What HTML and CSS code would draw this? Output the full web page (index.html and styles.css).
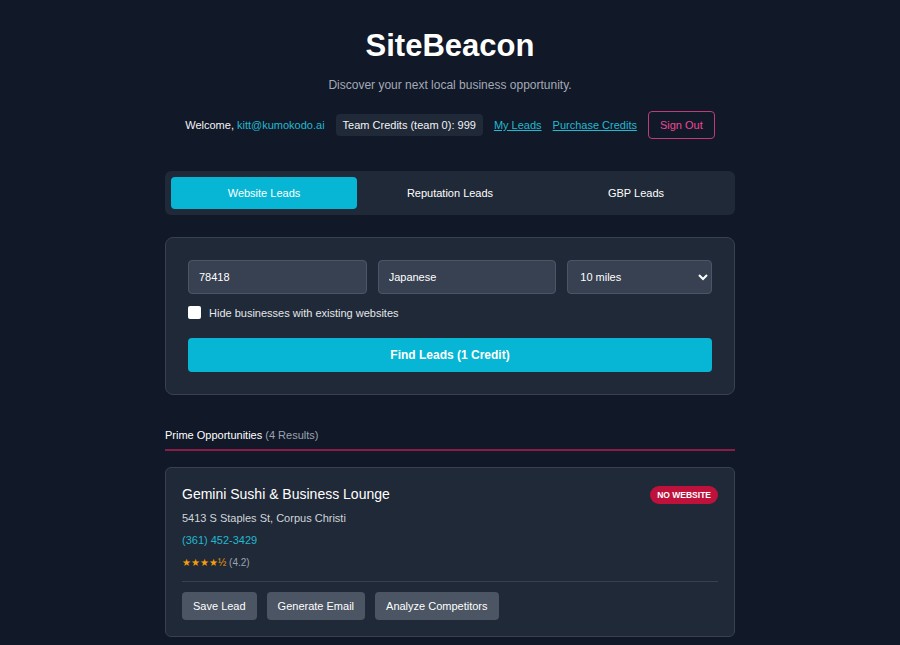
FILE: index.html
```html
<!DOCTYPE html>
<html lang="en">

<head>
    <meta charset="UTF-8">
    <meta name="viewport" content="width=device-width, initial-scale=1.0">
    <title>SiteBeacon</title>
    <link rel="stylesheet" href="styles.css">
</head>

<body>
    <main class="container">
        <header class="header">
            <h1 class="title">SiteBeacon</h1>
            <p class="subtitle">Discover your next local business opportunity.</p>
            <div class="user-bar">
                <span>Welcome, <span class="email">kitt@kumokodo.ai</span></span>
                <span class="credits">Team Credits (team 0): 999</span>
                <a href="#" class="link">My Leads</a>
                <a href="#" class="link">Purchase Credits</a>
                <button class="sign-out">Sign Out</button>
            </div>
        </header>

        <nav class="tabs">
            <button class="tab active">Website Leads</button>
            <button class="tab">Reputation Leads</button>
            <button class="tab">GBP Leads</button>
        </nav>

        <section class="search-card">
            <div class="fields">
                <input class="field" value="78418">
                <input class="field" value="Japanese">
                <select class="field select">
                    <option>10 miles</option>
                </select>
            </div>
            <label class="check-row">
                <span class="checkbox"></span>
                Hide businesses with existing websites
            </label>
            <button class="find-button">Find Leads (1 Credit)</button>
        </section>

        <h2 class="results-title">Prime Opportunities <span class="count">(4 Results)</span></h2>

        <article class="lead-card">
            <div class="lead-top">
                <div>
                    <h3 class="lead-name">Gemini Sushi &amp; Business Lounge</h3>
                    <div class="lead-address">5413 S Staples St, Corpus Christi</div>
                    <div class="lead-phone">(361) 452-3429</div>
                    <div class="lead-rating"><span class="stars">★★★★½</span> (4.2)</div>
                </div>
                <span class="badge">NO WEBSITE</span>
            </div>
            <div class="lead-actions">
                <button class="gray-button">Save Lead</button>
                <button class="gray-button">Generate Email</button>
                <button class="gray-button">Analyze Competitors</button>
            </div>
        </article>
    </main>
</body>

</html>
```

FILE: styles.css
```css
* {
    box-sizing: border-box;
}

body {
    margin: 0;
    background-color: #111827;
    color: #f3f4f6;
    font-family: "Liberation Sans", Arial, sans-serif;
    font-size: 11px;
}

.container {
    width: 570px;
    margin: 0 auto;
    padding-top: 28px;
}

.header {
    display: flex;
    flex-direction: column;
    align-items: center;
}

.title {
    margin: 0;
    font-size: 31px;
    line-height: 36px;
    font-weight: bold;
    color: #ffffff;
}

.subtitle {
    margin: 14px 0 0;
    font-size: 12px;
    color: #a3aab5;
}

.user-bar {
    display: flex;
    align-items: center;
    gap: 11px;
    margin-top: 19px;
    white-space: nowrap;
    color: #f3f4f6;
}

.email {
    color: #22b8cf;
}

.credits {
    padding: 5px 7px;
    background-color: #1f2937;
    border-radius: 4px;
}

.link {
    color: #22b8cf;
    text-decoration: underline;
}

.sign-out {
    height: 28px;
    padding: 0 11px;
    background: none;
    border: 1px solid #be3c78;
    border-radius: 4px;
    color: #ec4899;
    font-family: inherit;
    font-size: 11px;
}

.tabs {
    display: flex;
    margin-top: 32px;
    padding: 6px;
    background-color: #1f2937;
    border-radius: 6px;
}

.tab {
    flex: 1;
    height: 32px;
    background: none;
    border: none;
    border-radius: 4px;
    color: #ffffff;
    font-family: inherit;
    font-size: 11px;
}

.tab.active {
    background-color: #06b6d4;
}

.search-card {
    margin-top: 22px;
    padding: 22px;
    background-color: #1f2937;
    border: 1px solid #374151;
    border-radius: 8px;
}

.fields {
    display: grid;
    grid-template-columns: 1fr 1fr 0.81fr;
    gap: 11px;
}

.field {
    height: 34px;
    padding: 0 10px;
    background-color: #374151;
    border: 1px solid #4b5563;
    border-radius: 4px;
    color: #ffffff;
    font-family: inherit;
    font-size: 11px;
    outline: none;
}

.select {
    padding-left: 8px;
}

.check-row {
    display: flex;
    align-items: center;
    gap: 8px;
    margin-top: 12px;
    color: #e5e7eb;
}

.checkbox {
    width: 13px;
    height: 13px;
    background-color: #ffffff;
    border-radius: 2px;
}

.find-button {
    width: 100%;
    height: 34px;
    margin-top: 19px;
    background-color: #06b6d4;
    border: none;
    border-radius: 4px;
    color: #ffffff;
    font-family: inherit;
    font-size: 12px;
    font-weight: bold;
}

.results-title {
    margin: 34px 0 0;
    padding-bottom: 8px;
    border-bottom: 2px solid #8a1c48;
    font-size: 11px;
    font-weight: normal;
    color: #ffffff;
}

.count {
    color: #9ca3af;
}

.lead-card {
    margin-top: 16px;
    padding: 18px 16px 16px;
    background-color: #1f2937;
    border: 1px solid #374151;
    border-radius: 6px;
}

.lead-top {
    display: flex;
    justify-content: space-between;
    align-items: flex-start;
    padding-bottom: 13px;
    border-bottom: 1px solid #374151;
}

.lead-name {
    margin: 0;
    font-size: 14px;
    font-weight: normal;
    color: #ffffff;
}

.lead-address {
    margin-top: 10px;
    color: #d1d5db;
}

.lead-phone {
    margin-top: 10px;
    color: #22b8cf;
}

.lead-rating {
    margin-top: 11px;
    font-size: 10px;
    color: #9ca3af;
}

.stars {
    color: #f59e0b;
}

.badge {
    padding: 4px 7px;
    background-color: #be123c;
    border-radius: 10px;
    font-size: 8.5px;
    font-weight: bold;
    color: #ffffff;
}

.lead-actions {
    display: flex;
    gap: 10px;
    margin-top: 10px;
}

.gray-button {
    height: 28px;
    padding: 0 11px;
    background-color: #4b5563;
    border: none;
    border-radius: 4px;
    color: #ffffff;
    font-family: inherit;
    font-size: 11px;
}
```
